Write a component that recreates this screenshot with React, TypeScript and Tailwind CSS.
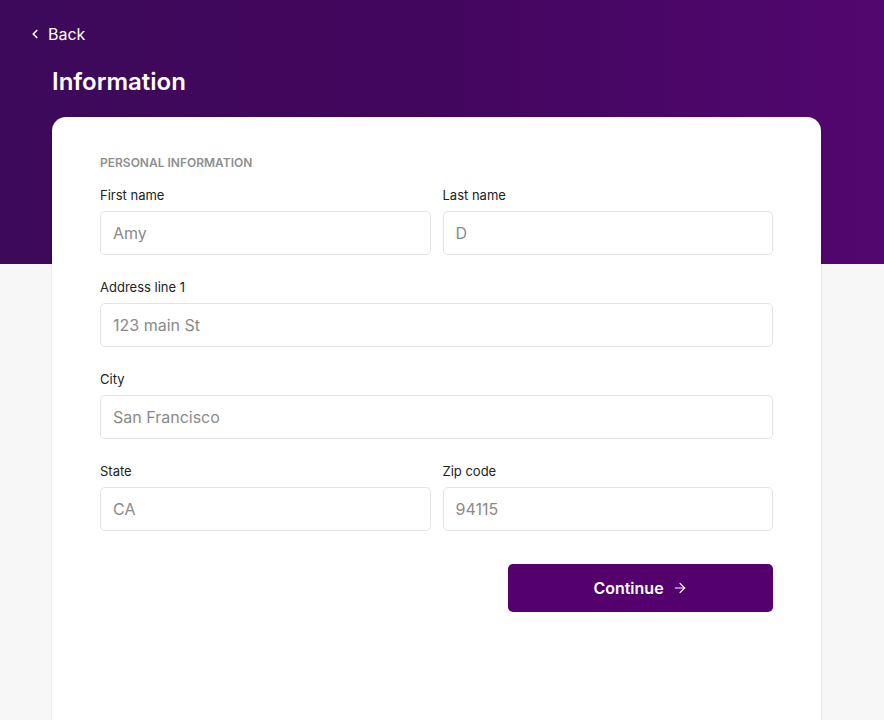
import { ChevronLeft, ArrowRight } from "lucide-react";

function Field({ label, value }: { label: string; value: string }) {
  return (
    <div className="flex flex-col flex-1">
      <label className="text-[13px] leading-4 text-[#222] mb-2">{label}</label>
      <div className="h-[44px] border border-[#e4e4e4] rounded-[5px] px-3 flex items-center text-[16px] text-[#8a8a8a] bg-white">
        {value}
      </div>
    </div>
  );
}

export default function App() {
  return (
    <div className="relative w-[884px] h-[720px] overflow-hidden bg-[#f7f7f8]" style={{ fontFamily: "Inter, 'Liberation Sans', sans-serif" }}>
      <div className="absolute inset-x-0 top-0 h-[264px] bg-gradient-to-r from-[#3d0a5a] via-[#43065f] to-[#52066f]" />
      <div className="relative flex flex-col">
        <div className="flex items-center gap-1.5 pl-[28px] pt-[24px] h-[44px] text-white text-[16px]">
          <ChevronLeft size={14} strokeWidth={3} />
          <span>Back</span>
        </div>
        <h1 className="pl-[52px] mt-[21px] text-white text-[24px] font-semibold leading-[34px]">Information</h1>
        <div className="mx-[52px] w-[769px] mt-[18px] h-[640px] bg-white rounded-[14px] shadow-sm px-[48px] pt-[37px]">
          <div className="text-[12px] font-semibold text-[#8f8f8f] mb-[15px]">PERSONAL INFORMATION</div>
          <div className="flex flex-col gap-6">
            <div className="flex gap-3">
              <Field label="First name" value="Amy" />
              <Field label="Last name" value="D" />
            </div>
            <Field label="Address line 1" value="123 main St" />
            <Field label="City" value="San Francisco" />
            <div className="flex gap-3">
              <Field label="State" value="CA" />
              <Field label="Zip code" value="94115" />
            </div>
          </div>
          <div className="flex justify-end mt-[33px]">
            <button className="w-[265px] h-[48px] rounded-[5px] bg-[#54006d] text-white text-[16px] font-semibold flex items-center justify-center gap-2">
              Continue <ArrowRight size={16} strokeWidth={1.75} />
            </button>
          </div>
        </div>
      </div>
    </div>
  );
}
